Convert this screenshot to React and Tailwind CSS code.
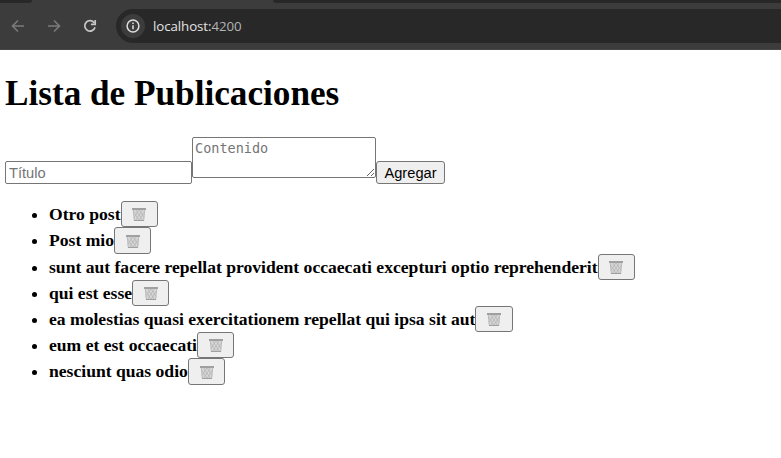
const posts = [
  'Otro post',
  'Post mio',
  'sunt aut facere repellat provident occaecati excepturi optio reprehenderit',
  'qui est esse',
  'ea molestias quasi exercitationem repellat qui ipsa sit aut',
  'eum et est occaecati',
  'nesciunt quas odio',
];

function TrashIcon() {
  return (
    <svg width="16" height="16" viewBox="0 0 16 16" fill="none">
      <path d="M1.8 3h12.4l-1.2 12H3z" fill="#d6d6d6" />
      <path
        d="M2.2 3.5l1.1 11M13.8 3.5l-1.1 11M4.5 3.5l7 11M8 3.5l5 8M2.8 6l5.2 8.5M11.5 3.5l-7 11M8 3.5l-5 8M13.2 6L8 14.5"
        stroke="#b2b2b2"
        strokeWidth="0.7"
      />
      <path d="M1 2h14v2H1z" fill="#a0a0a0" />
      <path d="M3 14h10v1H3z" fill="#a0a0a0" />
    </svg>
  );
}

function BrowserBar() {
  return (
    <header className="flex h-[50px] flex-col border-b border-[#474747] bg-[#3c3c3c]">
      <div className="flex h-[3px] shrink-0 justify-between">
        <div className="w-8 rounded-br-[6px] bg-[#282828]" />
        <div className="w-[508px] rounded-bl-[6px] bg-[#282828]" />
      </div>
      <div className="mt-[6px] flex h-[34px] items-center">
        <svg className="ml-[10px] shrink-0" width="16" height="16" viewBox="0 0 16 16" fill="none" stroke="#7b7b7b" strokeWidth="1.6">
          <path d="M14 8H3M8 2.5L2.5 8 8 13.5" />
        </svg>
        <svg className="ml-5 shrink-0" width="16" height="16" viewBox="0 0 16 16" fill="none" stroke="#7b7b7b" strokeWidth="1.6">
          <path d="M2 8h11M8 2.5L13.5 8 8 13.5" />
        </svg>
        <svg className="ml-5 shrink-0" width="16" height="16" viewBox="0 0 16 16" fill="none" stroke="#c7c7c7" strokeWidth="1.7">
          <path d="M13 9.2A5.2 5.2 0 1 1 12.3 5" />
          <path d="M13.2 2v4.3H8.9" />
        </svg>
        <div className="ml-[18px] flex h-[34px] flex-1 items-center rounded-l-full bg-[#282828] pl-[5px]">
          <div className="flex size-6 items-center justify-center rounded-full bg-[#3c3c3c]">
            <svg width="14" height="14" viewBox="0 0 14 14" fill="none" stroke="#dedede" strokeWidth="1.5">
              <circle cx="7" cy="7" r="5.9" />
              <path d="M7 6.2v4M7 3.6v1.5" />
            </svg>
          </div>
          <span className="ml-2 pt-px font-['Open_Sans',sans-serif] text-[13.3px] tracking-[-0.08px] text-[#e3e3e3]">
            localhost:<span className="text-[#b4b4b4]">4200</span>
          </span>
        </div>
      </div>
    </header>
  );
}

export default function App() {
  return (
    <div className="h-[458px] overflow-hidden bg-white font-['Liberation_Serif',serif] text-[17.6px] text-black">
      <BrowserBar />
      <main className="pl-[5px]">
        <h1 className="pt-6 text-[35.2px] leading-[40px] font-bold">Lista de Publicaciones</h1>
        <form className="mt-[23px] flex items-start">
          <input
            placeholder="Título"
            className="mt-6 h-[23px] w-[187px] rounded-[2px] border border-[#767676] px-[3px] font-['Liberation_Sans',sans-serif] text-[14.67px] placeholder:text-[#757575]"
          />
          <textarea
            placeholder="Contenido"
            className="h-[41px] w-[184px] resize rounded-[2px] border border-[#767676] px-[2px] py-[2px] font-['DejaVu_Sans_Mono',monospace] text-[13.5px] leading-[17px] placeholder:text-[#757575]"
          />
          <button
            type="button"
            className="mt-6 h-[23px] w-[69px] rounded-[3px] border border-[#767676] bg-[#efefef] pt-px font-['Liberation_Sans',sans-serif] text-[14.67px] leading-[21px]"
          >
            Agregar
          </button>
        </form>
        <ul className="mt-[17.2px] list-disc pl-11">
          {posts.map((title) => (
            <li key={title} className="h-[26.2px]">
              <div className="flex h-[26.2px] items-center">
                <strong className="whitespace-nowrap">{title}</strong>
                <button
                  type="button"
                  aria-label="Eliminar"
                  className="flex h-[26.2px] w-[37.4px] items-center justify-center rounded-[3px] border border-[#767676] bg-[#efefef]"
                >
                  <TrashIcon />
                </button>
              </div>
            </li>
          ))}
        </ul>
      </main>
    </div>
  );
}
